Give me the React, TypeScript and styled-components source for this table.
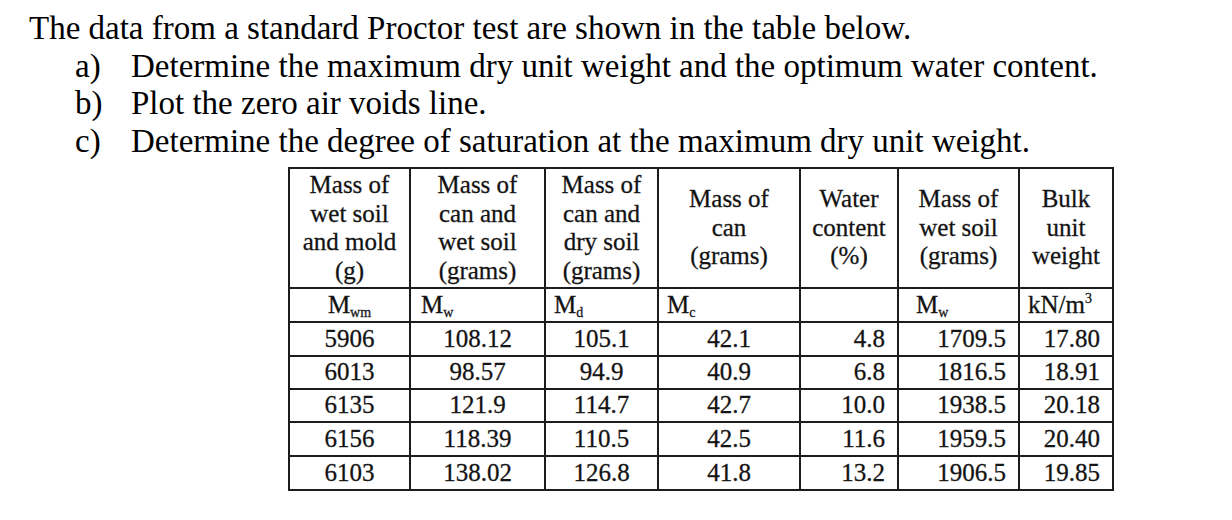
import styled, { createGlobalStyle } from "styled-components";

const GlobalStyle = createGlobalStyle`
  html, body {
    margin: 0;
    padding: 0;
    background: #fff;
  }
  body {
    font-family: "Liberation Serif", "Times New Roman", serif;
    color: #000;
  }
`;

const Page = styled.div`
  padding: 10px 0 0 29px;
  font-size: 33px;
  line-height: 37.5px;
`;

const Intro = styled.p`
  margin: 0;
`;

const Parts = styled.ol`
  list-style: none;
  margin: 0;
  padding: 0 0 0 46px;
`;

const Part = styled.li`
  display: flex;
`;

const Marker = styled.span`
  width: 56px;
  flex: none;
`;

const Table = styled.table`
  margin: 7px 0 0 259px;
  border-collapse: separate;
  border-spacing: 0;
  table-layout: fixed;
  width: 826px;
  border-top: 2px solid #1c1c1c;
  border-left: 2px solid #1c1c1c;
  font-family: "Liberation Serif", "Times New Roman", serif;
  font-size: 25px;
  line-height: 28.5px;
  color: #111;
  -webkit-text-stroke: 0.3px #222;
`;

const Col = styled.col<{ $w: number }>`
  width: ${(p) => p.$w}px;
`;

const Cell = styled.td<{ $h: number; $align?: string; $pl?: number }>`
  box-sizing: border-box;
  height: ${(p) => p.$h}px;
  padding: 0 12px 0 ${(p) => p.$pl ?? 12}px;
  border-right: 2px solid #1c1c1c;
  border-bottom: 2px solid #1c1c1c;
  text-align: ${(p) => p.$align ?? "center"};
  vertical-align: middle;
  white-space: nowrap;
`;

const Head = styled(Cell)`
  padding: 0;
`;

const Sub = styled.sub`
  font-size: 14px;
  line-height: 0;
  vertical-align: -4px;
`;

const Sup = styled.sup`
  font-size: 14px;
  line-height: 0;
  vertical-align: 10px;
`;

const widths = [121, 135, 113, 142, 98, 121, 94];

const headers = [
  ["Mass of", "wet soil", "and mold", "(g)"],
  ["Mass of", "can and", "wet soil", "(grams)"],
  ["Mass of", "can and", "dry soil", "(grams)"],
  ["Mass of", "can", "(grams)"],
  ["Water", "content", "(%)"],
  ["Mass of", "wet soil", "(grams)"],
  ["Bulk", "unit", "weight"],
];

const rows = [
  ["5906", "108.12", "105.1", "42.1", "4.8", "1709.5", "17.80"],
  ["6013", "98.57", "94.9", "40.9", "6.8", "1816.5", "18.91"],
  ["6135", "121.9", "114.7", "42.7", "10.0", "1938.5", "20.18"],
  ["6156", "118.39", "110.5", "42.5", "11.6", "1959.5", "20.40"],
  ["6103", "138.02", "126.8", "41.8", "13.2", "1906.5", "19.85"],
];

const align = ["center", "center", "center", "center", "right", "right", "right"];

export default function App() {
  return (
    <>
      <GlobalStyle />
      <Page>
        <Intro>The data from a standard Proctor test are shown in the table below.</Intro>
        <Parts>
          <Part>
            <Marker>a)</Marker>Determine the maximum dry unit weight and the optimum water content.
          </Part>
          <Part>
            <Marker>b)</Marker>Plot the zero air voids line.
          </Part>
          <Part>
            <Marker>c)</Marker>Determine the degree of saturation at the maximum dry unit weight.
          </Part>
        </Parts>
        <Table>
          <colgroup>
            {widths.map((w, i) => (
              <Col key={i} $w={w} />
            ))}
          </colgroup>
          <tbody>
            <tr>
              {headers.map((lines, i) => (
                <Head key={i} $h={120}>
                  {lines.map((l, j) => (
                    <div key={j}>{l}</div>
                  ))}
                </Head>
              ))}
            </tr>
            <tr>
              <Cell $h={34}>
                M<Sub>wm</Sub>
              </Cell>
              <Cell $h={34} $align="left" $pl={10}>
                M<Sub>w</Sub>
              </Cell>
              <Cell $h={34} $align="left" $pl={8}>
                M<Sub>d</Sub>
              </Cell>
              <Cell $h={34} $align="left" $pl={8}>
                M<Sub>c</Sub>
              </Cell>
              <Cell $h={34} />
              <Cell $h={34} $align="left" $pl={17}>
                M<Sub>w</Sub>
              </Cell>
              <Cell $h={34} $align="left" $pl={8}>
                kN/m<Sup>3</Sup>
              </Cell>
            </tr>
            {rows.map((r, i) => (
              <tr key={i}>
                {r.map((v, j) => (
                  <Cell key={j} $h={i === 1 || i === 2 ? 33 : 34} $align={align[j]}>
                    {v}
                  </Cell>
                ))}
              </tr>
            ))}
          </tbody>
        </Table>
      </Page>
    </>
  );
}
